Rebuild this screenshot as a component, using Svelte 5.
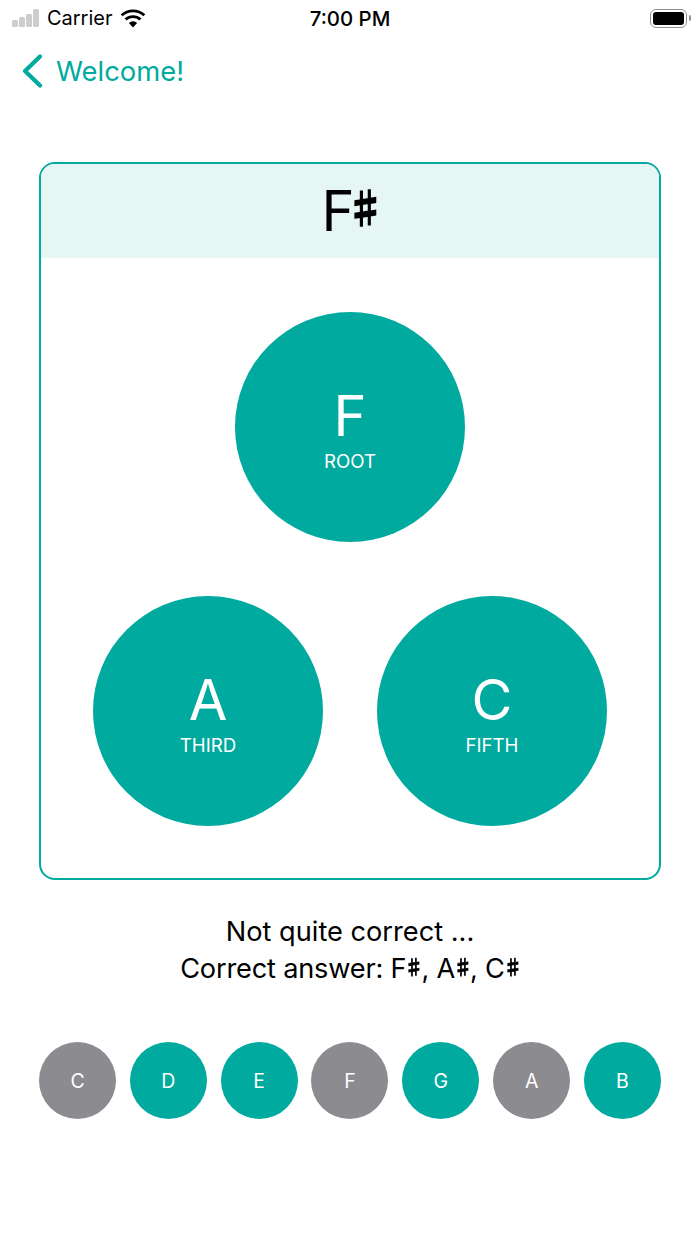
<script>
  const triad = [
    { note: "A", label: "THIRD" },
    { note: "C", label: "FIFTH" }
  ];
  const keys = [
    { note: "C", off: true },
    { note: "D", off: false },
    { note: "E", off: false },
    { note: "F", off: true },
    { note: "G", off: false },
    { note: "A", off: true },
    { note: "B", off: false }
  ];
</script>

<div class="screen">
  <header class="status">
    <div class="status-left">
      <div class="signal">
        <i style="height: 7px"></i>
        <i style="height: 10px"></i>
        <i style="height: 13px"></i>
        <i style="height: 18px"></i>
      </div>
      <span>Carrier</span>
      <svg width="26" height="19" viewBox="0 0 26 19">
        <path d="M13 18.5 L8.9 13.9 A6 6 0 0 1 17.1 13.9 Z" fill="#000" />
        <path d="M5.6 10.4 A11 11 0 0 1 20.4 10.4" fill="none" stroke="#000" stroke-width="2.8" />
        <path d="M1.7 6.3 A16.6 16.6 0 0 1 24.3 6.3" fill="none" stroke="#000" stroke-width="2.8" />
      </svg>
    </div>
    <span class="time">7:00 PM</span>
    <div class="battery">
      <div class="battery-body"><div class="battery-fill"></div></div>
      <div class="battery-cap"></div>
    </div>
  </header>

  <nav class="nav">
    <svg width="22" height="34" viewBox="0 0 22 34">
      <path d="M19 2.5 L4 17 L19 31.5" fill="none" stroke="#00aa9e" stroke-width="4.2" stroke-linecap="round" stroke-linejoin="round" />
    </svg>
    <span>Welcome!</span>
  </nav>

  <section class="card">
    <h1 class="chord">F<span class="sharp">♯</span></h1>
    <div class="triad">
      <div class="circle">
        <span class="note">F</span>
        <span class="role">ROOT</span>
      </div>
      <div class="row">
        {#each triad as item}
          <div class="circle">
            <span class="note">{item.note}</span>
            <span class="role">{item.label}</span>
          </div>
        {/each}
      </div>
    </div>
  </section>

  <p class="feedback">
    Not quite correct ...<br />
    <span class="answer">Correct answer: F<span class="small-sharp">♯</span>, A<span class="small-sharp">♯</span>, C<span class="small-sharp">♯</span></span>
  </p>

  <div class="keys">
    {#each keys as key}
      <button type="button" class="key" class:off={key.off}>{key.note}</button>
    {/each}
  </div>
</div>

<style>
  :global(body) {
    margin: 0;
    background: #fff;
  }

  .screen {
    width: 700px;
    height: 1244px;
    overflow: hidden;
    font-family: Inter, "Liberation Sans", sans-serif;
    color: #000;
  }

  .status {
    height: 36px;
    padding: 0 9px 0 12px;
    display: flex;
    align-items: center;
    justify-content: space-between;
    position: relative;
    font-size: 20px;
  }

  .status-left {
    display: flex;
    align-items: center;
    gap: 8px;
  }

  .signal {
    display: flex;
    align-items: flex-end;
    gap: 1.5px;
    height: 18px;
  }

  .signal i {
    width: 5.6px;
    border-radius: 1.5px;
    background: #cdcdcd;
  }

  .time {
    position: absolute;
    left: 0;
    right: 0;
    text-align: center;
    font-size: 20.4px;
    font-weight: 500;
  }

  .battery {
    display: flex;
    align-items: center;
    gap: 2px;
  }

  .battery-body {
    width: 37px;
    height: 19px;
    padding: 2px;
    box-sizing: border-box;
    border: 1.5px solid #8e8e93;
    border-radius: 6px;
  }

  .battery-fill {
    height: 100%;
    background: #000;
    border-radius: 3px;
  }

  .battery-cap {
    width: 2px;
    height: 6px;
    background: #8e8e93;
    border-radius: 0 2px 2px 0;
  }

  .nav {
    height: 70px;
    padding-left: 21px;
    display: flex;
    align-items: center;
    gap: 13px;
    color: #00aa9e;
    font-size: 27.4px;
  }

  .card {
    margin: 56px 39px 0;
    height: 718px;
    box-sizing: border-box;
    border: 2px solid #00aa9e;
    border-radius: 16px;
    overflow: hidden;
  }

  .chord {
    margin: 0;
    height: 94px;
    background: #e5f6f5;
    display: flex;
    align-items: center;
    justify-content: center;
    font-size: 56px;
    font-weight: 400;
  }

  .sharp {
    display: block;
    width: 24px;
    text-indent: -9.5px;
    white-space: nowrap;
    font-family: "Noto Sans CJK JP", sans-serif;
    font-weight: 700;
    font-size: 40px;
    line-height: 1;
    margin-bottom: 10px;
    -webkit-text-stroke: 1.6px #000;
    will-change: transform;
  }

  .answer {
    letter-spacing: -0.2px;
  }

  .small-sharp {
    display: inline-block;
    width: 15px;
    text-indent: -2px;
    white-space: nowrap;
    font-family: "Noto Sans CJK JP", sans-serif;
    font-weight: 700;
    font-size: 20px;
    line-height: 0;
    vertical-align: 3px;
    -webkit-text-stroke: 0.8px #000;
    will-change: transform;
  }

  .triad {
    padding-top: 54px;
    display: flex;
    flex-direction: column;
    align-items: center;
    gap: 54px;
  }

  .row {
    display: flex;
    gap: 54px;
  }

  .circle {
    width: 230px;
    height: 230px;
    border-radius: 50%;
    background: #00aa9e;
    color: #fff;
    display: flex;
    flex-direction: column;
    align-items: center;
    justify-content: center;
  }

  .note {
    font-size: 56px;
    line-height: 64px;
    margin-top: 4px;
  }

  .role {
    margin-top: 2px;
    font-size: 18.7px;
    line-height: 24px;
  }

  .feedback {
    margin: 33px 0 0;
    text-align: center;
    font-size: 27.2px;
    line-height: 37px;
  }

  .keys {
    margin: 55px 39px 0;
    display: flex;
    justify-content: space-between;
  }

  .key {
    width: 77px;
    height: 77px;
    padding: 0;
    border: 0;
    border-radius: 50%;
    background: #00aa9e;
    color: #fff;
    font: inherit;
    font-size: 19.5px;
  }

  .key.off {
    background: #8b8b90;
  }
</style>
